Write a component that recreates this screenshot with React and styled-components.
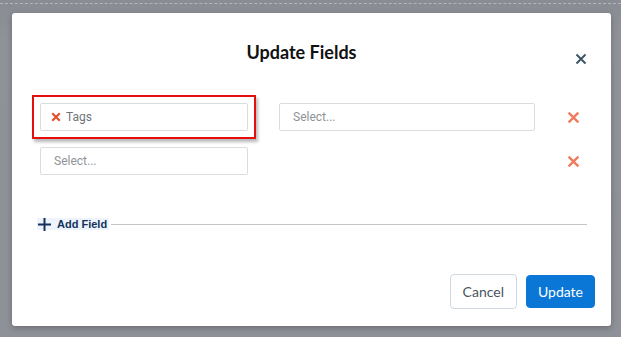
import React from "react";
import styled, { createGlobalStyle } from "styled-components";

const GlobalStyle = createGlobalStyle`
  html, body {
    margin: 0;
    padding: 0;
    width: 621px;
    height: 337px;
    overflow: hidden;
  }
  body {
    font-family: "Roboto", "Liberation Sans", sans-serif;
    background: #8d9096;
  }
`;

const Backdrop = styled.div`
  position: relative;
  width: 621px;
  height: 337px;
  box-sizing: border-box;
  padding: 13px 10px 11px 12px;
  background: linear-gradient(#898c92, #8f9298 40px, #8e9197);
  &::before {
    content: "";
    position: absolute;
    left: 0;
    right: 0;
    top: 3px;
    border-top: 1px dashed #b3b6bb;
  }
`;

const Modal = styled.div`
  position: relative;
  width: 599px;
  height: 313px;
  background: #fff;
  border-radius: 3px;
  box-shadow: 0 2px 6px rgba(0, 0, 0, 0.25);
  display: flex;
  flex-direction: column;
  box-sizing: border-box;
`;

const Header = styled.div`
  display: flex;
  align-items: flex-start;
  padding: 28px 20px 0 20px;
  height: 54px;
  box-sizing: border-box;
`;

const Title = styled.h2`
  flex: 1;
  margin: 0;
  text-align: center;
  font-family: "Lato", "Liberation Sans", sans-serif;
  font-weight: 700;
  font-size: 18px;
  color: #111;
  line-height: 22px;
`;

const CloseButton = styled.button`
  width: 20px;
  height: 20px;
  margin-top: 8px;
  padding: 0;
  border: 0;
  background: none;
  display: flex;
  align-items: center;
  justify-content: center;
  color: #3d5666;
`;

const Body = styled.div`
  flex: 1;
  padding: 36px 28px 0 28px;
  display: flex;
  flex-direction: column;
  gap: 16px;
`;

const Row = styled.div`
  display: flex;
  align-items: center;
  height: 28px;
`;

const Cell = styled.div`
  position: relative;
  width: ${(p) => p.$w}px;
  margin-right: ${(p) => p.$mr || 0}px;
  ${(p) =>
    p.$highlight &&
    `
    &::after {
      content: "";
      position: absolute;
      inset: -8px;
      border: 2px solid #e80d0d;
      box-shadow: 2px 3px 3px rgba(0, 0, 0, 0.28);
      pointer-events: none;
    }
  `}
`;

const Field = styled.div`
  height: 28px;
  box-sizing: border-box;
  border: 1px solid #dcdcdc;
  border-radius: 2px;
  display: flex;
  align-items: center;
  gap: 5px;
  padding-left: ${(p) => p.$pl || 13}px;
  font-size: 12px;
  color: ${(p) => (p.$placeholder ? "#8f9397" : "#6f7479")};
`;

const Spacer = styled.div`
  flex: 1;
`;

const RemoveButton = styled.button`
  width: 20px;
  height: 20px;
  padding: 0;
  border: 0;
  background: none;
  display: flex;
  align-items: center;
  justify-content: center;
`;

const AddRow = styled.div`
  margin-top: 27px;
  margin-left: -3px;
  margin-right: -4px;
  display: flex;
  align-items: center;
`;

const AddButton = styled.button`
  display: flex;
  align-items: center;
  gap: 6px;
  height: 12px;
  padding: 0 2px 0 1px;
  border: 0;
  background: #edf4fb;
  font-family: "Liberation Sans", Arial, sans-serif;
  font-weight: 700;
  font-size: 11px;
  color: #16325c;
`;

const Divider = styled.div`
  flex: 1;
  height: 1px;
  background: #c4c4c4;
  margin-left: 2px;
`;

const Footer = styled.div`
  display: flex;
  justify-content: flex-end;
  align-items: center;
  gap: 9px;
  padding: 0 16px 17px 0;
`;

const Button = styled.button`
  height: ${(p) => (p.$primary ? 33 : 35)}px;
  padding: 0 ${(p) => (p.$primary ? 11 : 12)}px;
  border-radius: 4px;
  border: 1px solid ${(p) => (p.$primary ? "#0a76d6" : "#d0d7de")};
  background: ${(p) => (p.$primary ? "#0a76d6" : "#fff")};
  color: ${(p) => (p.$primary ? "#fff" : "#4a5560")};
  font-family: "Lato", "Liberation Sans", sans-serif;
  font-size: 14px;
`;

const Cross = ({ size = 12, color, stroke = 2.4 }) => (
  <svg width={size} height={size} viewBox="0 0 12 12">
    <path
      d="M1.5 1.5 L10.5 10.5 M10.5 1.5 L1.5 10.5"
      stroke={color}
      strokeWidth={stroke}
      strokeLinecap="butt"
    />
  </svg>
);

const Plus = () => (
  <svg width="13" height="13" viewBox="0 0 13 13">
    <path d="M6.5 0 V13 M0 6.5 H13" stroke="#16325c" strokeWidth="2" />
  </svg>
);

export default function App() {
  return (
    <>
      <GlobalStyle />
      <Backdrop>
        <Modal>
          <Header>
            <Title>Update Fields</Title>
            <CloseButton>
              <Cross size={12} color="#3d5666" stroke={2} />
            </CloseButton>
          </Header>
          <Body>
            <Row>
              <Cell $w={208} $mr={31} $highlight>
                <Field $pl={10}>
                  <Cross size={10} color="#e5502b" stroke={2.6} />
                  Tags
                </Field>
              </Cell>
              <Cell $w={256}>
                <Field $placeholder $pl={13}>
                  Select...
                </Field>
              </Cell>
              <Spacer />
              <RemoveButton>
                <Cross size={13} color="#f07b5d" stroke={2.2} />
              </RemoveButton>
            </Row>
            <Row>
              <Cell $w={208}>
                <Field $placeholder $pl={13}>
                  Select...
                </Field>
              </Cell>
              <Spacer />
              <RemoveButton>
                <Cross size={13} color="#f07b5d" stroke={2.2} />
              </RemoveButton>
            </Row>
            <AddRow>
              <AddButton>
                <Plus />
                Add Field
              </AddButton>
              <Divider />
            </AddRow>
          </Body>
          <Footer>
            <Button>Cancel</Button>
            <Button $primary>Update</Button>
          </Footer>
        </Modal>
      </Backdrop>
    </>
  );
}
